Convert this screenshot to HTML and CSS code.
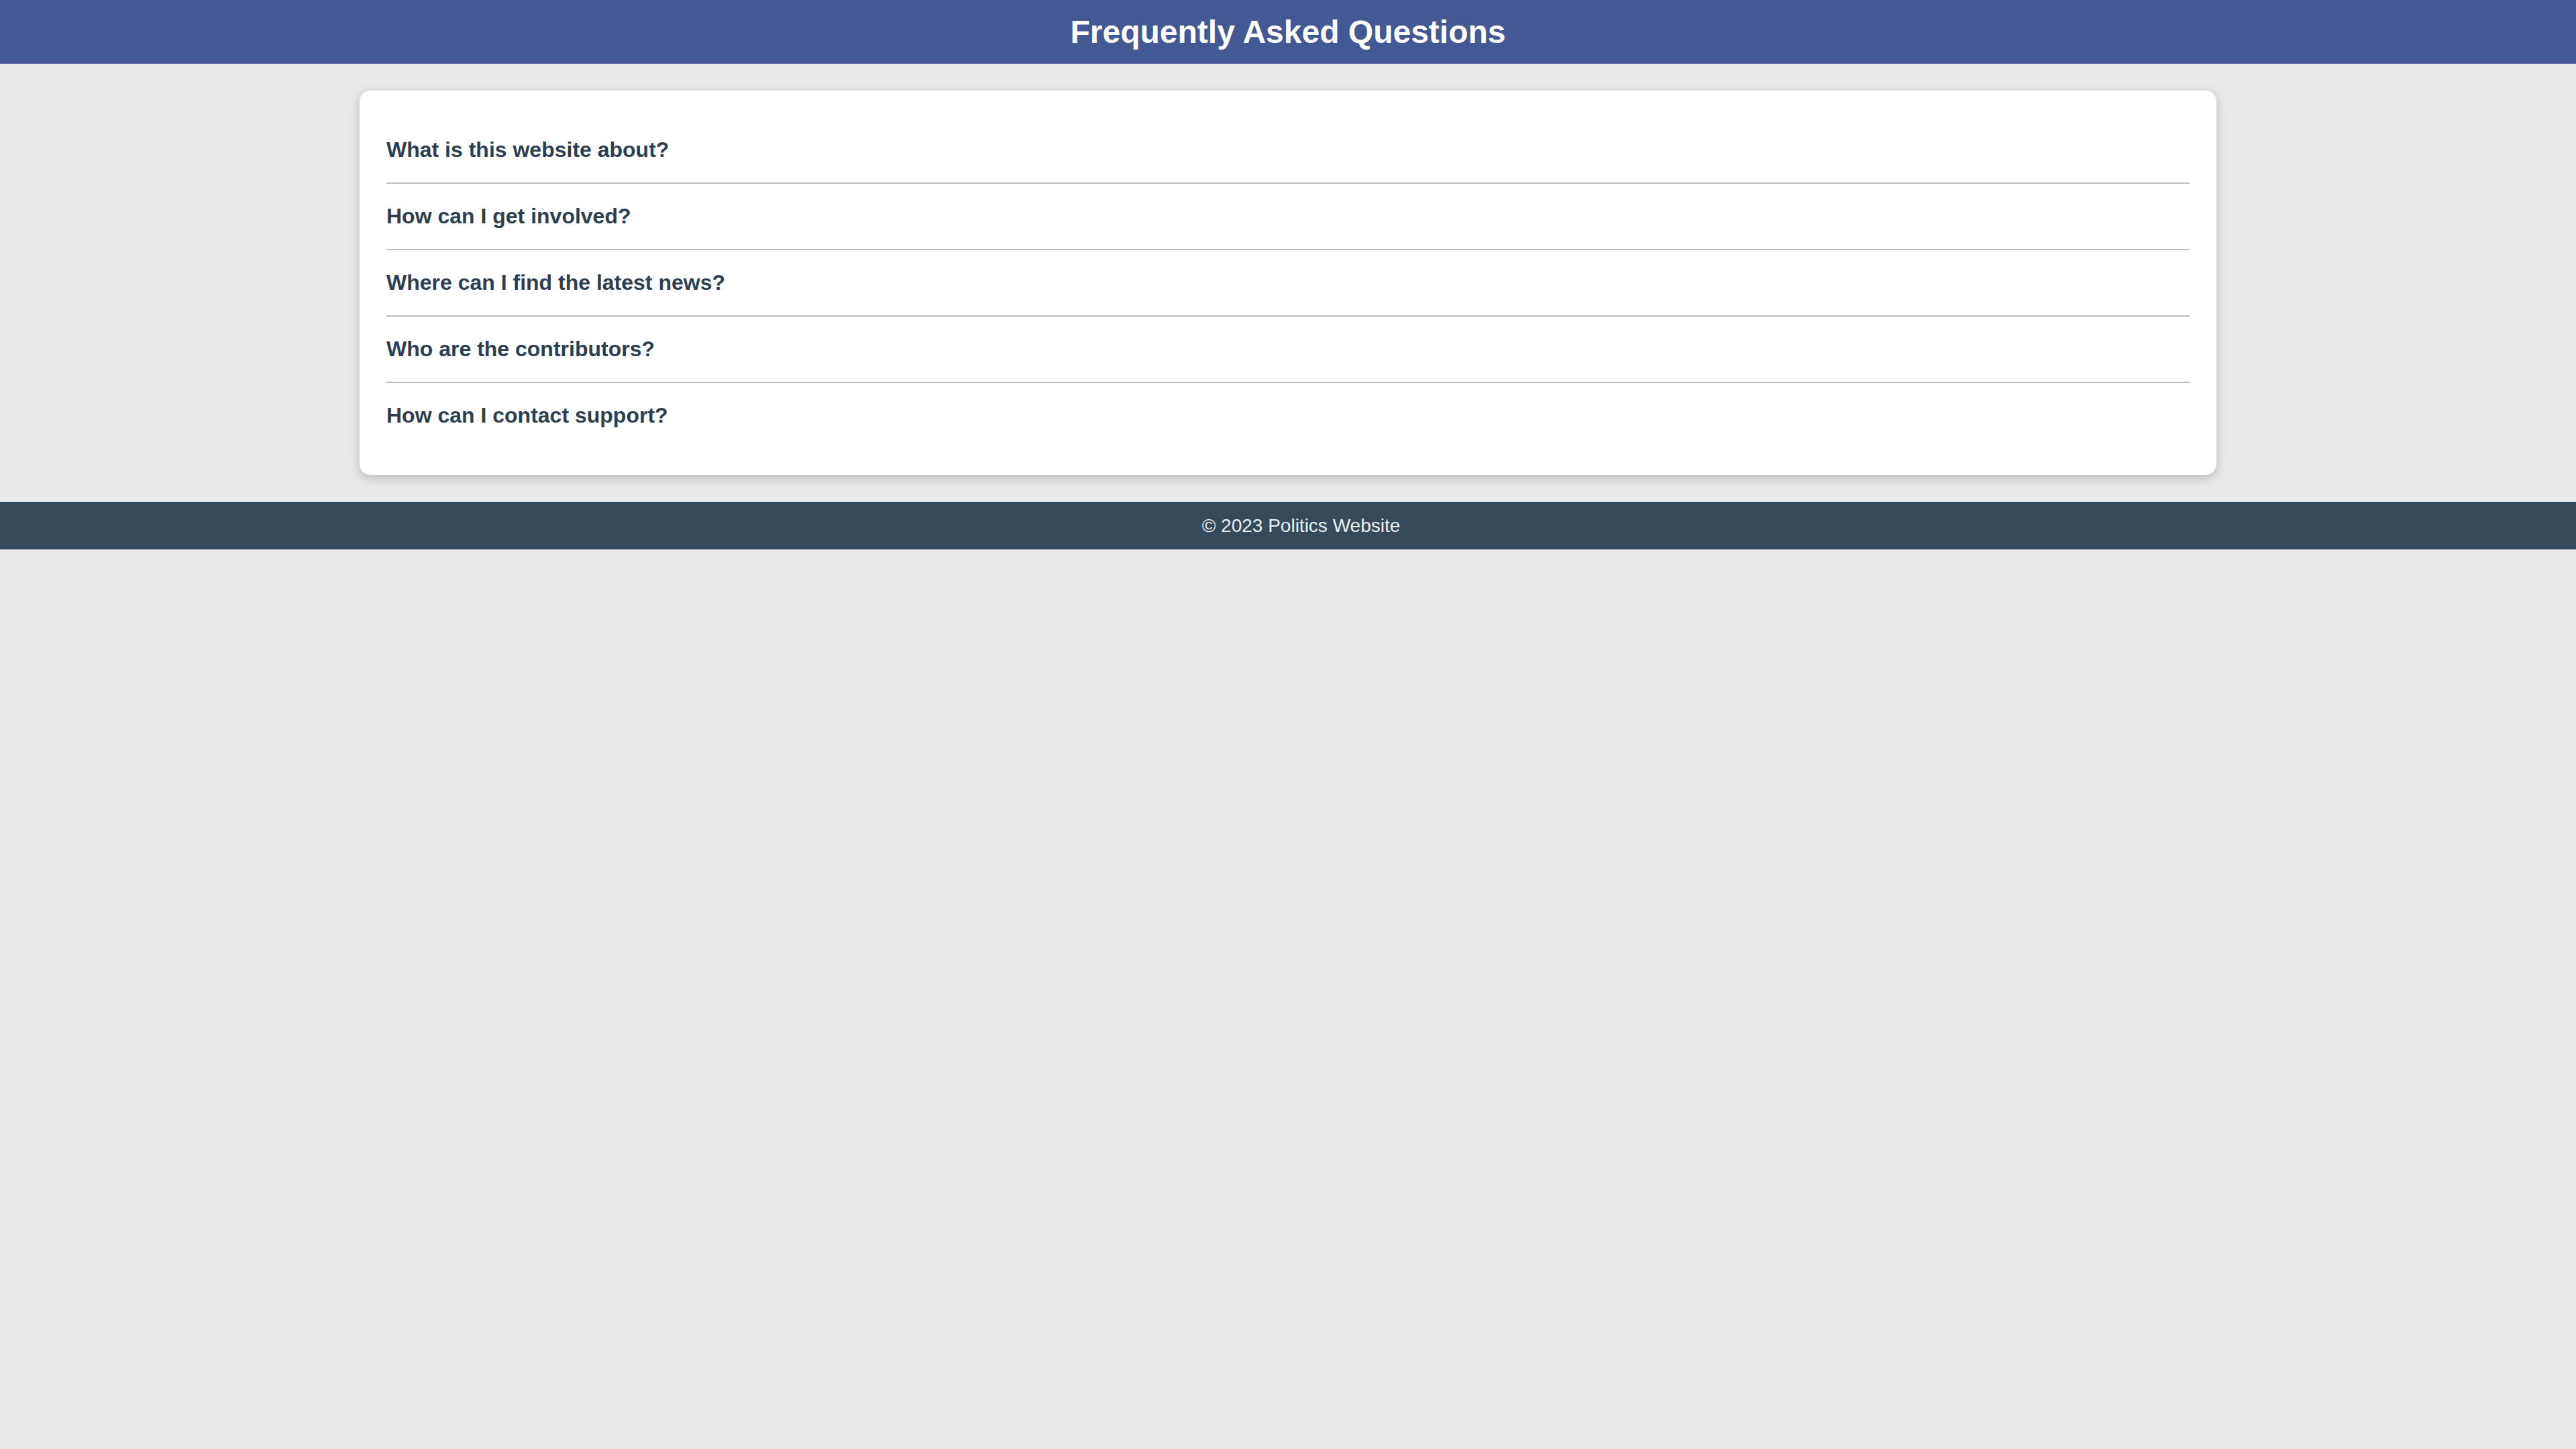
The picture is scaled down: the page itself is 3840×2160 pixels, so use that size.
FILE: index.html
```html
<!DOCTYPE html>
<html lang="en">
<head>
<meta charset="utf-8">
<title>FAQ - Politics Website</title>
<link rel="stylesheet" href="styles.css">
</head>
<body>
<header class="site-header">
  <h1 class="site-title">Frequently Asked Questions</h1>
</header>
<main class="faq-card">
  <div class="faq-item"><h2 class="faq-question">What is this website about?</h2></div>
  <div class="faq-item"><h2 class="faq-question">How can I get involved?</h2></div>
  <div class="faq-item"><h2 class="faq-question">Where can I find the latest news?</h2></div>
  <div class="faq-item"><h2 class="faq-question">Who are the contributors?</h2></div>
  <div class="faq-item"><h2 class="faq-question">How can I contact support?</h2></div>
</main>
<footer class="site-footer">
  <p class="footer-text">© 2023 Politics Website</p>
</footer>
</body>
</html>
```
FILE: styles.css
```css
html, body {
  margin: 0;
  padding: 0;
}
body {
  background: #e9e9e9;
  font-family: "Liberation Sans", Arial, Helvetica, sans-serif;
  color: #2c3e50;
}
.site-header {
  background: #425994;
  padding: 20px 0;
  text-align: center;
}
.site-title {
  margin: 0;
  color: #ffffff;
  font-size: 48px;
  font-weight: 700;
  line-height: 55px;
}
.faq-card {
  display: block;
  max-width: 2688px;
  margin: 40px auto;
  padding: 40px;
  background: #ffffff;
  border-radius: 16px;
  box-shadow: 0 4px 16px rgba(0, 0, 0, 0.22);
}
.faq-item {
  padding: 30px 0;
  border-bottom: 2px solid #bdbdbd;
}
.faq-item:last-child {
  border-bottom: none;
}
.faq-question {
  margin: 0;
  font-size: 32px;
  font-weight: 700;
  line-height: 37px;
  color: #2c3e50;
}
.site-footer {
  background: #374a5c;
  padding: 20px 0 20px 39px;
  text-align: center;
}
.footer-text {
  margin: 0;
  color: #ecf0f1;
  font-size: 28px;
  line-height: 31px;
}
```
